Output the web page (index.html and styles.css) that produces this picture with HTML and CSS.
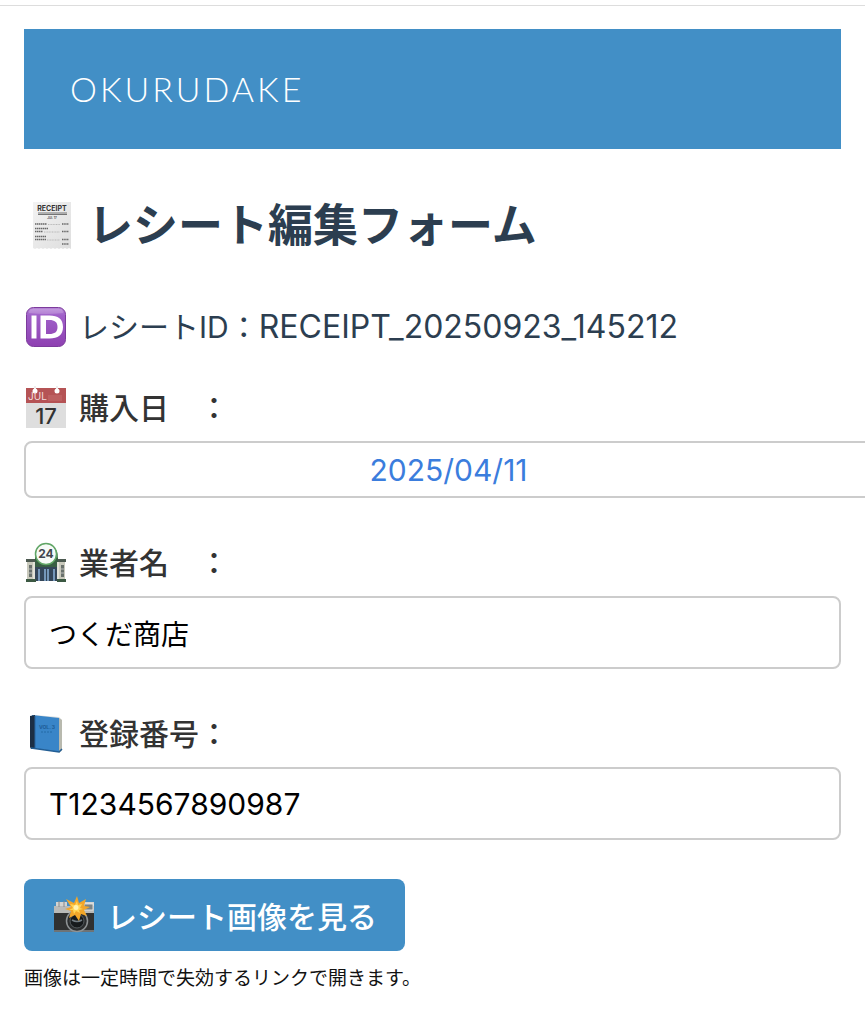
FILE: index.html
```html
<!DOCTYPE html>
<html lang="ja">
<head>
<meta charset="utf-8">
<meta name="viewport" content="width=device-width, initial-scale=1">
<title>レシート編集フォーム</title>
<link rel="stylesheet" href="styles.css">
</head>
<body>
<main class="page">
  <header class="banner"><span class="logo">OKURUDAKE</span></header>

  <h1 class="title">
    <svg class="title-icon" viewBox="0 0 56 56" aria-hidden="true">
      <defs><linearGradient id="paper" x1="0" y1="0" x2="1" y2="1"><stop offset="0" stop-color="#f3f3f3"/><stop offset="1" stop-color="#dedede"/></linearGradient></defs>
      <path d="M9 4h38v47l-2-1-2 1-2-1-2 1-2-1-2 1-2-1-2 1-2-1-2 1-2-1-2 1-2-1-2 1-2-1-2 1-2-1-2 1-2-1z" fill="url(#paper)"/>
      <text x="28" y="13" text-anchor="middle" class="receipt-head">RECEIPT</text>
      <path d="M14 15h29M14 16.500h29" stroke="#555" stroke-width=".8"/>
      <text x="28" y="21" text-anchor="middle" class="receipt-line">JUL 17</text>
      <g stroke="#666" stroke-width="1.500">
        <path d="M11 26h12" stroke-dasharray="1.500 .5"/><path d="M11 30.500h13M11 33.500h8" stroke-dasharray="1.500 .5"/><path d="M11 38.500h11M11 41.500h11" stroke-dasharray="1.500 .5"/>
        <path d="M38 26h7M38 33.500h7M38 41.500h7M38 46h7" stroke-dasharray="1.500 .7"/>
      </g>
      <path d="M24 26.500h12M20 34h16M23 42h13" stroke="#999" stroke-width=".6" stroke-dasharray="1 .6"/>
    </svg>
    <span>レシート編集フォーム</span>
  </h1>

  <form class="form">
    <p class="row receipt-id">
      <svg class="icon" viewBox="0 0 44 44" aria-hidden="true">
        <defs><linearGradient id="violet" x1="0" y1="0" x2="0" y2="1"><stop offset="0" stop-color="#b989d8"/><stop offset=".2" stop-color="#a061c9"/><stop offset="1" stop-color="#8e40b1"/></linearGradient></defs>
        <rect x="2.500" y="2.500" width="39" height="39" rx="7" fill="url(#violet)" stroke="#7c3b9c"/>
        <path d="M8 4h28q3 0 3 4-17 2-34 0 0-4 3-4z" fill="#fff" opacity=".18"/>
        <path d="M7.500 10.500h5v23h-5z" fill="#fff"/>
        <path fill-rule="evenodd" d="M16.500 10.500h9C34 10.500 39 14 39 22s-5 11.500-13.500 11.500h-9zm5.500 4.500v14h3.500c5 0 8-2 8-7s-3-7-8-7z" fill="#fff"/>
      </svg>
      <span>レシートID：<span class="id-value">RECEIPT_20250923_145212</span></span>
    </p>

    <div class="field">
      <label class="row" for="date">
        <svg class="icon" viewBox="0 0 44 44" aria-hidden="true">
          <path d="M2 2h40v40H2z" fill="#dedede"/>
          <path d="M2 2h40v15H2z" fill="#b55355"/>
          <path d="M24 9h14v6H24z" fill="#c66d6d" opacity=".5"/>
          <path d="M11 0v4M33 0v4" stroke="#eee" stroke-width="2"/>
          <circle cx="11" cy="5" r="2.500" fill="#fff"/><circle cx="33" cy="5" r="2.500" fill="#fff"/>
          <text x="4" y="14" class="cal-month">JUL</text>
          <text x="22" y="38" text-anchor="middle" class="cal-day">17</text>
        </svg>
        <span>購入日　：</span>
      </label>
      <input class="input date" id="date" type="text" inputmode="numeric" value="2025/04/11">
    </div>

    <div class="field">
      <label class="row" for="vendor">
        <svg class="icon" viewBox="0 0 44 44" aria-hidden="true">
          <path d="M11 17Q11 8 17 5h11q6 3 6 12z" fill="#477451"/>
          <path d="M3 19h38v21H3z" fill="#c9c9bc"/>
          <path d="M2 18h11v3H2zM31 18h11v3H31z" fill="#4d5a51"/>
          <path d="M11 17h23v9H11z" fill="#395f43"/>
          <path d="M11 26h23v14H11z" fill="#344659"/>
          <path d="M15 28v12M21 28v12M24 28v12M30 28v12" stroke="#7597b9" stroke-width="2"/>
          <path d="M10 21v19M34 21v19" stroke="#e2e2d8" stroke-width="2"/>
          <path d="M5 24h3v12H5zM37 24h3v12h-3z" fill="#69716c"/>
          <path d="M5 28h3M5 32h3M37 28h3M37 32h3" stroke="#bbb" stroke-width="1"/>
          <path d="M2 38h10v3H2zM33 38h9v3h-9z" fill="#3c5943"/>
          <circle cx="22" cy="13" r="10.500" fill="#f7faf7" stroke="#60a565" stroke-width="1.500"/>
          <text x="22" y="17" text-anchor="middle" class="store-sign">24</text>
        </svg>
        <span>業者名　：</span>
      </label>
      <input class="input vendor" id="vendor" type="text" value="つくだ商店">
    </div>

    <div class="field">
      <label class="row" for="number">
        <svg class="icon" viewBox="0 0 44 44" aria-hidden="true">
          <path d="M10 3l25 2 3 3v31l-3 1z" fill="#d9dddd"/>
          <path d="M35 6l3 2v30l-3 3z" fill="#b8b9ae"/>
          <path d="M8 3l27 3v34L8 36z" fill="#3985c8"/>
          <path d="M6 4l5-1v33l-4 1-1-2z" fill="#1c2e43"/>
          <path d="M7 36l28 4 3-3" fill="none" stroke="#235e94" stroke-width="1.500"/>
          <path d="M11 4v32" stroke="#2764a0"/>
          <text x="23" y="17" text-anchor="middle" class="book-title">VOL. 3</text>
          <path d="M17 20h12" stroke="#256aa6" stroke-dasharray="2 1"/>
        </svg>
        <span>登録番号：</span>
      </label>
      <input class="input" id="number" type="text" value="T1234567890987">
    </div>

    <button class="button" type="button">
      <svg class="icon" viewBox="0 0 44 44" aria-hidden="true">
        <path d="M4 9h11v5H4zM31 9h11v6H31z" fill="#d3d3d0"/>
        <path d="M2 13h40v10H2z" fill="#b9bab8"/>
        <path d="M2 20h40v19H2z" fill="#303131"/>
        <path d="M2 37h40v2H2z" fill="#6e7376"/>
        <path d="M7 8v6M12 8v6" stroke="#888" stroke-width="1"/>
        <rect x="32" y="11" width="9" height="6" fill="#7c8587" stroke="#eee" stroke-width=".8"/>
        <circle cx="25" cy="28" r="10.500" fill="#2b2d2e" stroke="#8e9294" stroke-width="1.500"/>
        <circle cx="25" cy="28" r="7" fill="#171a1c" stroke="#555b5e"/>
        <path d="M20 27q5 3 10 0" fill="none" stroke="#727c82" stroke-width="1.500"/>
        <path d="M25 3l2 7 7-4-2 7 6 1-6 3 3 6-6-2-2 7-4-6-6 3 2-7-6-2 6-2-5-8 8 4z" fill="#f2a629"/>
        <path d="M25 8l1 4 4-1-2 4 3 1-4 1 1 3-4-2-2 3-1-4-4 0 4-2-3-4 5 1z" fill="#ffd555"/>
        <circle cx="24" cy="14.500" r="2.500" fill="#fff3b2"/>
      </svg>
      <span>レシート画像を見る</span>
    </button>
    <p class="note">画像は一定時間で失効するリンクで開きます。</p>
  </form>
</main>
</body>
</html>
```
FILE: styles.css
```css
* { box-sizing: border-box; }

body {
  margin: 0;
  overflow-x: hidden;
  background: #fff;
  color: #333;
  font-family: Inter, "Noto Sans CJK JP", sans-serif;
  font-size: 30px;
}

.page {
  margin-top: 5px;
  padding: 23px 24px 24px;
  border-top: 1px solid #ddd;
}

.banner {
  display: flex;
  align-items: center;
  height: 120px;
  padding: 0 46px;
  background: #428fc6;
}

.logo {
  color: #fff;
  font-family: Lato, sans-serif;
  font-size: 34px;
  font-weight: 300;
  line-height: 40px;
  letter-spacing: 3px;
}

.title {
  display: flex;
  align-items: center;
  gap: 8px;
  margin: 47px 0 0;
  color: #2c3e50;
  font-size: 45px;
  font-weight: 700;
  line-height: 60px;
}

.title-icon { flex: none; width: 56px; height: 56px; }
.icon { flex: none; width: 44px; height: 44px; }

.row {
  display: flex;
  align-items: center;
  gap: 11px;
  line-height: 44px;
  white-space: nowrap;
}

.receipt-id { margin: 49px 0 37px; color: #2c3e50; }
.id-value { font-size: 32px; }

.field { margin-bottom: 43px; }
.field .row { margin-bottom: 11px; font-weight: 500; }

.input {
  display: block;
  width: 100%;
  height: 73px;
  padding: 0 23px;
  border: 2px solid #ccc;
  border-radius: 8px;
  background: #fff;
  color: #000;
  font: inherit;
}

.vendor { font-size: 28px; }

.date {
  width: calc(100% + 32px);
  height: 57px;
  color: #3b7ddd;
  text-align: center;
}

.button {
  display: flex;
  align-items: center;
  gap: 11px;
  height: 72px;
  margin-top: -4px;
  padding: 0 28px;
  border: 0;
  border-radius: 8px;
  background: #428fc6;
  color: #fff;
  font: inherit;
  font-weight: 500;
}

.note {
  margin: 14px 0 0;
  color: #111;
  font-size: 19px;
  line-height: 28px;
}

.receipt-head { fill: #333; font: 700 7px Inter, sans-serif; }
.receipt-line { fill: #555; font: 700 3px Inter, sans-serif; }
.cal-month { fill: #f3dede; font: 400 10px Inter, sans-serif; }
.cal-day { fill: #333; font: 500 22px Inter, sans-serif; }
.store-sign { fill: #41464f; font: 700 12px Inter, sans-serif; }
.book-title { fill: #1d5c97; font: 700 5px Inter, sans-serif; }
```
